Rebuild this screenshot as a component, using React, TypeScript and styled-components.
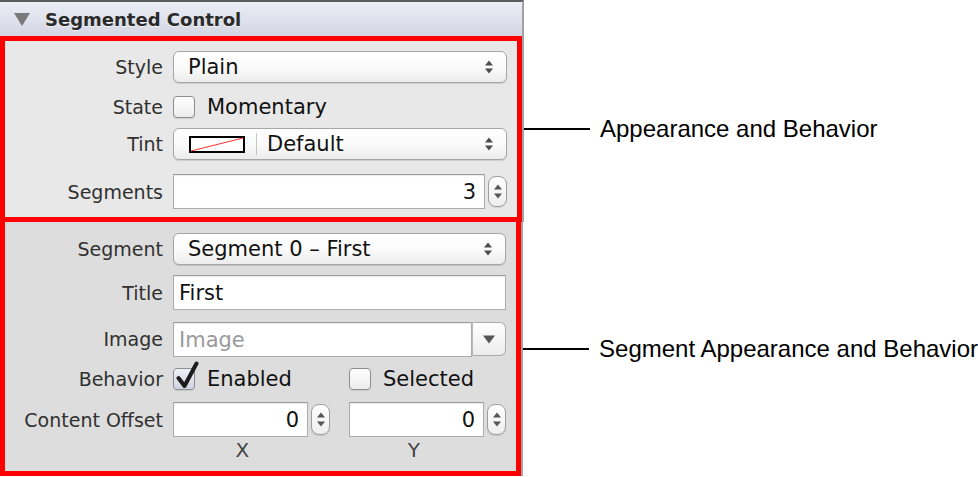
import React from "react";
import styled, { createGlobalStyle } from "styled-components";

const Global = createGlobalStyle`
  html, body { margin: 0; padding: 0; background: #ffffff; }
  body { font-family: "DejaVu Sans", "Liberation Sans", sans-serif; }
`;

const Page = styled.div`
  width: 978px;
  height: 477px;
  display: flex;
  flex-direction: column;
  background: #fff;
  overflow: hidden;
`;

const Header = styled.div`
  height: 34px;
  border-top: 2px solid #5e5e5e;
  border-right: 2px solid #a2a2a2;
  background: linear-gradient(#eceef6, #d3d6e2);
  display: flex;
  align-items: center;
  gap: 15px;
  padding-left: 14px;
  box-sizing: content-box;
  width: 508px;
`;

const HeaderTitle = styled.span`
  font-weight: bold;
  font-size: 18px;
  color: #2a2a2a;
  text-shadow: 0 1px 0 rgba(255, 255, 255, 0.6);
`;

const Section = styled.div`
  display: flex;
  align-items: center;
`;

const PanelCol = styled.div`
  width: 522px;
  border-right: 2px solid #a2a2a2;
  background: #dcdcdc;
  align-self: stretch;
`;

const Box = styled.div<{ $first?: boolean }>`
  border: 5px solid #ff0000;
  border-top-width: ${(p) => (p.$first ? "5px" : "0")};
  background: ${(p) => (p.$first ? "#e8e8e8" : "#dddddd")};
  display: flex;
  flex-direction: column;
  padding: ${(p) => (p.$first ? "10px 10px 9px 0" : "11px 10px 8px 0")};
`;

const Row = styled.div<{ $h: number; $mt?: number }>`
  display: grid;
  grid-template-columns: 158px 1fr;
  column-gap: 10px;
  align-items: center;
  height: ${(p) => p.$h}px;
  margin-top: ${(p) => p.$mt ?? 0}px;
`;

const Label = styled.span`
  text-align: right;
  font-size: 19px;
  color: #303030;
  white-space: nowrap;
`;

const Popup = styled.div`
  height: 30px;
  border: 1px solid #a6a6a6;
  border-radius: 6px;
  background: linear-gradient(#ffffff, #fbfbfb 50%, #ececec);
  box-shadow: 0 1px 1px rgba(0, 0, 0, 0.12);
  display: flex;
  align-items: center;
  padding: 0 12px 0 14px;
  font-size: 21px;
  color: #111;
`;

const PopupText = styled.span`
  flex: 1;
`;

const Swatch = styled.svg`
  width: 56px;
  height: 17px;
  margin-left: 1px;
`;

const Sep = styled.div`
  width: 1px;
  height: 22px;
  background: #c4c4c4;
  margin: 0 10px 0 11px;
`;

const FieldWithStepper = styled.div`
  display: flex;
  align-items: center;
  gap: 3px;
`;

const TextField = styled.div<{ $right?: boolean; $placeholder?: boolean }>`
  flex: 1;
  height: 33px;
  border: 1px solid #acacac;
  border-top-color: #9c9c9c;
  background: #fff;
  box-shadow: inset 0 1px 1px rgba(0, 0, 0, 0.08);
  display: flex;
  align-items: center;
  justify-content: ${(p) => (p.$right ? "flex-end" : "flex-start")};
  padding: 0 8px 0 5px;
  font-size: 21px;
  color: ${(p) => (p.$placeholder ? "#9a9a9a" : "#111")};
`;

const StepperBox = styled.div`
  width: 19px;
  height: 31px;
  border: 1px solid #9e9e9e;
  border-radius: 8px;
  background: linear-gradient(#ffffff, #eeeeee);
  display: flex;
  flex-direction: column;
  align-items: center;
  justify-content: space-between;
  padding: 7px 0;
  box-sizing: border-box;
  box-shadow: 0 1px 1px rgba(0, 0, 0, 0.1);
`;

const Combo = styled.div`
  display: flex;
  height: 34px;
`;

const ComboButton = styled.div`
  width: 32px;
  border: 1px solid #acacac;
  border-left-color: #b8b8b8;
  border-radius: 0 6px 6px 0;
  background: linear-gradient(#ffffff, #ececec);
  display: flex;
  align-items: center;
  justify-content: center;
`;

const CheckRow = styled.div`
  display: flex;
  align-items: center;
`;

const CheckItem = styled.div<{ $w?: number }>`
  display: flex;
  align-items: center;
  gap: 12px;
  width: ${(p) => (p.$w ? `${p.$w}px` : "auto")};
  font-size: 21px;
  color: #111;
`;

const CheckBoxEl = styled.div<{ $checked?: boolean }>`
  position: relative;
  width: 20px;
  height: 20px;
  border: 1px solid #8e8e8e;
  border-radius: 4px;
  background: ${(p) =>
    p.$checked
      ? "linear-gradient(#f0f2f8, #cfd4e0)"
      : "linear-gradient(#ffffff, #ececec)"};
  box-shadow: 0 1px 1px rgba(0, 0, 0, 0.1);
`;

const CheckMark = styled.svg`
  position: absolute;
  left: 1px;
  top: -8px;
  width: 24px;
  height: 29px;
`;

const OffsetPair = styled.div`
  display: grid;
  grid-template-columns: 1fr 1fr;
  column-gap: 19px;
`;

const AxisRow = styled.div`
  display: grid;
  grid-template-columns: 158px 1fr 1fr;
  column-gap: 10px;
  height: 26px;
  align-items: center;
`;

const Axis = styled.span`
  font-size: 20px;
  color: #444;
  text-align: center;
  padding-right: 23px;
  &:last-child {
    margin-left: 9px;
    padding-right: 32px;
  }
`;

const Callout = styled.div`
  display: flex;
  align-items: center;
`;

const Leader = styled.div`
  width: 66px;
  height: 2px;
  background: #000;
  margin-right: 10px;
`;

const CalloutText = styled.span`
  font-family: "Liberation Sans", Arial, sans-serif;
  font-size: 24px;
  color: #000;
  white-space: nowrap;
`;

const Arrows = () => (
  <svg width="10" height="16" viewBox="0 0 10 16">
    <path d="M1 6.5 L5 1.5 L9 6.5 Z" fill="#4c4c4c" />
    <path d="M1 9.5 L5 14.5 L9 9.5 Z" fill="#4c4c4c" />
  </svg>
);

const Tri = ({ down }: { down?: boolean }) => (
  <svg width="8" height="6" viewBox="0 0 8 6">
    <path d={down ? "M0 0.5 L8 0.5 L4 5.5 Z" : "M0 5.5 L8 5.5 L4 0.5 Z"} fill="#555" />
  </svg>
);

const Stepper = () => (
  <StepperBox>
    <Tri />
    <Tri down />
  </StepperBox>
);

const CheckBox = ({ checked }: { checked?: boolean }) => (
  <CheckBoxEl $checked={checked}>
    {checked && (
      <CheckMark viewBox="0 0 24 29">
        <path
          d="M3.5 17 L9.5 25 L21.5 2.5"
          fill="none"
          stroke="#1c1c1c"
          strokeWidth="4"
          strokeLinecap="round"
          strokeLinejoin="round"
        />
      </CheckMark>
    )}
  </CheckBoxEl>
);

export default function App() {
  return (
    <Page>
      <Global />
      <Header>
        <svg width="16" height="14" viewBox="0 0 16 14">
          <path d="M0 1 L16 1 L8 14 Z" fill="#7a7a7a" />
        </svg>
        <HeaderTitle>Segmented Control</HeaderTitle>
      </Header>

      <Section>
        <PanelCol>
          <Box $first>
            <Row $h={32}>
              <Label>Style</Label>
              <Popup>
                <PopupText>Plain</PopupText>
                <Arrows />
              </Popup>
            </Row>
            <Row $h={22} $mt={12}>
              <Label>State</Label>
              <CheckRow>
                <CheckItem>
                  <CheckBox />
                  Momentary
                </CheckItem>
              </CheckRow>
            </Row>
            <Row $h={32} $mt={11}>
              <Label>Tint</Label>
              <Popup>
                <Swatch viewBox="0 0 56 17">
                  <rect x="1" y="1" width="54" height="15" fill="#fff" stroke="#000" strokeWidth="2" />
                  <line x1="2" y1="15" x2="54" y2="2" stroke="#ff3030" strokeWidth="1" />
                </Swatch>
                <Sep />
                <PopupText>Default</PopupText>
                <Arrows />
              </Popup>
            </Row>
            <Row $h={34} $mt={14}>
              <Label>Segments</Label>
              <FieldWithStepper>
                <TextField $right>3</TextField>
                <Stepper />
              </FieldWithStepper>
            </Row>
          </Box>
        </PanelCol>
        <Callout>
          <Leader />
          <CalloutText>Appearance and Behavior</CalloutText>
        </Callout>
      </Section>

      <Section>
        <PanelCol>
          <Box>
            <Row $h={32}>
              <Label>Segment</Label>
              <Popup>
                <PopupText>Segment 0 – First</PopupText>
                <Arrows />
              </Popup>
            </Row>
            <Row $h={35} $mt={10}>
              <Label>Title</Label>
              <TextField>First</TextField>
            </Row>
            <Row $h={34} $mt={12}>
              <Label>Image</Label>
              <Combo>
                <TextField $placeholder>Image</TextField>
                <ComboButton>
                  <svg width="12" height="9" viewBox="0 0 12 9">
                    <path d="M0 0.5 L12 0.5 L6 8.5 Z" fill="#555" />
                  </svg>
                </ComboButton>
              </Combo>
            </Row>
            <Row $h={23} $mt={11}>
              <Label>Behavior</Label>
              <CheckRow>
                <CheckItem $w={176}>
                  <CheckBox checked />
                  Enabled
                </CheckItem>
                <CheckItem>
                  <CheckBox />
                  Selected
                </CheckItem>
              </CheckRow>
            </Row>
            <Row $h={35} $mt={12}>
              <Label>Content Offset</Label>
              <OffsetPair>
                <FieldWithStepper>
                  <TextField $right>0</TextField>
                  <Stepper />
                </FieldWithStepper>
                <FieldWithStepper>
                  <TextField $right>0</TextField>
                  <Stepper />
                </FieldWithStepper>
              </OffsetPair>
            </Row>
            <AxisRow>
              <span />
              <Axis>X</Axis>
              <Axis>Y</Axis>
            </AxisRow>
          </Box>
        </PanelCol>
        <Callout>
          <Leader />
          <CalloutText>Segment Appearance and Behavior</CalloutText>
        </Callout>
      </Section>
    </Page>
  );
}
